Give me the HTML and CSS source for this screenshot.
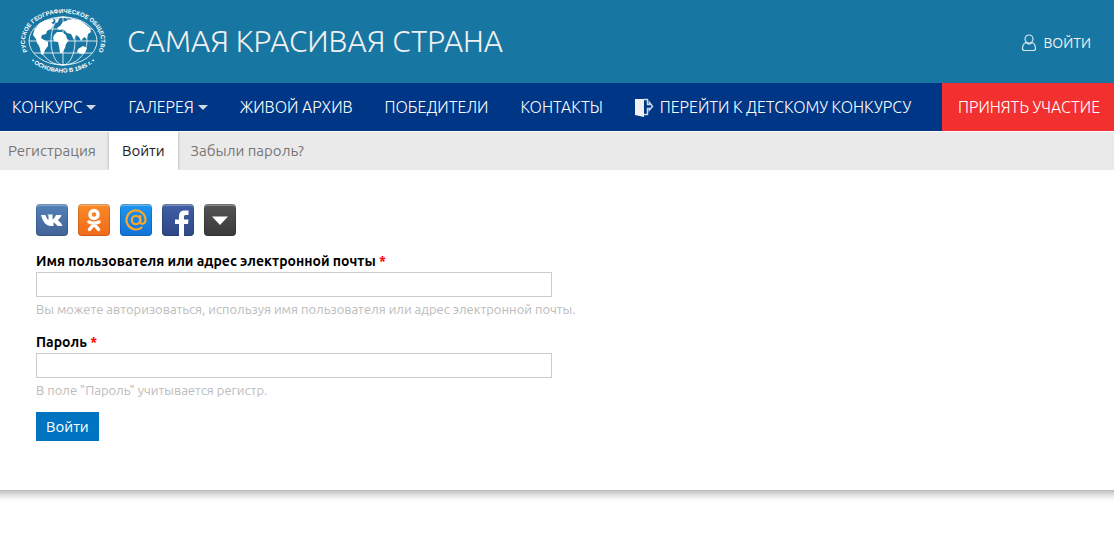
FILE: index.html
```html
<!DOCTYPE html>
<html lang="ru">

<head>
  <meta charset="utf-8">
  <title>Самая красивая страна</title>
  <link rel="stylesheet" href="styles.css">
</head>

<body>
  <div class="wrapper">
    <header class="header">
      <a class="brand" href="#">
        <svg class="logo" viewBox="0 0 88 68" width="88" height="68" aria-hidden="true">
          <defs>
            <path id="arc-top" d="M13.600 50.900A38 28 0 1 1 74.400 50.900" />
            <path id="arc-bottom" d="M8 50A42 32 0 0 0 80 50" />
          </defs>
          <ellipse class="globe-line" cx="44" cy="34" rx="34" ry="24" />
          <ellipse class="globe-line" cx="44" cy="34" rx="24" ry="24" />
          <ellipse class="globe-line" cx="44" cy="34" rx="12" ry="24" />
          <path class="globe-line" d="M10 34h68M44 10v48M15 22h58M15 46h58" />
          <path class="land" d="M16 22l5-6 6-3 6-1 2 2-3 2 3 1-2 4-5 3-1 3-4 1-1 3 3 2 4 2 0 4-3 4-2 5-2-1-1-7-3-4-1-4-3-4 1-4z" />
          <path class="land" d="M35 28l3-3 5 0 4 3 1 4 2 1-3 4-1 4-3 5-2 0-1-7-1-4-4-1-1-3z" />
          <path class="land" d="M41 19l3-4 5-2 5-1 6 1 5 3 6 5 1 4-3 2-1 5-3-2-3 4-2-4-3-2-2 5-3-6-4-1-4-4-4 1-2-2z" />
          <path class="land" d="M59 42l5-3 4 2-2 5-4 1-4-2zM36 12l4-1-1 4-2 1z" />
          <text class="logo-text" text-anchor="middle"><textPath href="#arc-top" startOffset="50%">РУССКОЕ ГЕОГРАФИЧЕСКОЕ ОБЩЕСТВО</textPath></text>
          <text class="logo-text" text-anchor="middle"><textPath href="#arc-bottom" startOffset="50%">• ОСНОВАНО В 1845 г. •</textPath></text>
        </svg>
        <span class="site-name">САМАЯ КРАСИВАЯ СТРАНА</span>
      </a>
      <a class="login-link" href="#">
        <svg width="16" height="18" viewBox="0 0 16 18" aria-hidden="true">
          <circle cx="8" cy="5" r="4" />
          <path d="M5 8.500C2.500 9.500 1.500 11.500 1.500 14.500Q1.500 16.500 3.500 16.500H12.500Q14.500 16.500 14.500 14.500C14.500 11.500 13.500 9.500 11 8.500M5 8.500Q8 11.500 11 8.500" />
        </svg>
        ВОЙТИ
      </a>
    </header>

    <nav class="menu">
      <a class="menu-item has-children" href="#">КОНКУРС</a>
      <a class="menu-item has-children" href="#">ГАЛЕРЕЯ</a>
      <a class="menu-item" href="#">ЖИВОЙ АРХИВ</a>
      <a class="menu-item" href="#">ПОБЕДИТЕЛИ</a>
      <a class="menu-item" href="#">КОНТАКТЫ</a>
      <a class="menu-item" href="#">
        <svg class="door" width="19" height="19" viewBox="0 0 19 19" aria-hidden="true">
          <path class="door-leaf" d="M0 1H9V19L0 17z" />
          <path class="door-arrow" d="M9 1.500H12.500V6.500H14.500V4.500L17.500 8.500L14.500 12V10.500H12.500V16.500H9" />
        </svg>
        ПЕРЕЙТИ К ДЕТСКОМУ КОНКУРСУ
      </a>
      <a class="menu-item join" href="#">ПРИНЯТЬ УЧАСТИЕ</a>
    </nav>

    <div class="tabs">
      <a class="tab" href="#">Регистрация</a>
      <a class="tab active" href="#">Войти</a>
      <a class="tab" href="#">Забыли пароль?</a>
    </div>

    <main class="content">
      <div class="social">
        <button type="button" class="social-button vk" aria-label="ВКонтакте">
          <svg viewBox="0 0 32 32" aria-hidden="true">
            <path d="M5 11H9.500C10.500 14 11.500 15.500 12.500 16V11.500L11 10.500H16.500V15.500C18 15 19 13 20 11H25.500C25 13 23.500 14.500 21.800 16.300C23.500 17.800 25.500 19 26.500 22H21.500C20 20 19 19 17.500 18.500V22H15C10 22 7 18 5 11z" />
          </svg>
        </button>
        <button type="button" class="social-button ok" aria-label="Одноклассники">
          <svg viewBox="0 0 32 32" aria-hidden="true">
            <circle class="stroke" cx="16" cy="10.500" r="4" />
            <path class="stroke" d="M11 18Q16 20.500 21 18M16 20L11.500 25.500M16 20L20.500 25.500" />
          </svg>
        </button>
        <button type="button" class="social-button mailru" aria-label="Mail.ru">
          <svg viewBox="0 0 32 32" aria-hidden="true">
            <circle class="stroke" cx="16" cy="16" r="4.200" />
            <path class="stroke" d="M20.200 12V17.500C20.200 21 25.500 20.500 25.500 16A9.500 9.500 0 1 0 21.500 23.700" />
          </svg>
        </button>
        <button type="button" class="social-button facebook" aria-label="Facebook">
          <svg viewBox="0 0 32 32" aria-hidden="true">
            <path d="M17 32V20H13V15.500H17V12.500C17 8.500 19 6.500 22.500 6.500H26.500V11H24C22.500 11 22 11.500 22 13V15.500H26.500L26 20H22V32z" />
          </svg>
        </button>
        <button type="button" class="social-button more" aria-label="Ещё">
          <svg viewBox="0 0 32 32" aria-hidden="true">
            <path d="M8 12.500H24L16 21z" />
          </svg>
        </button>
      </div>

      <form class="login-form">
        <div class="form-item">
          <label for="name">Имя пользователя или адрес электронной почты <span class="required">*</span></label>
          <input type="text" id="name" name="name">
          <div class="description">Вы можете авторизоваться, используя имя пользователя или адрес электронной почты.</div>
        </div>
        <div class="form-item">
          <label for="pass">Пароль <span class="required">*</span></label>
          <input type="password" id="pass" name="pass">
          <div class="description">В поле "Пароль" учитывается регистр.</div>
        </div>
        <button type="submit" class="submit">Войти</button>
      </form>
    </main>
  </div>
  <div class="page-edge"></div>
</body>

</html>
```
FILE: styles.css
```css
* {
  box-sizing: border-box;
}

body {
  margin: 0;
  font-family: Ubuntu, "Open Sans", "Noto Sans", sans-serif;
  font-size: 15px;
  color: #000;
  background-color: #fff;
}

a {
  color: inherit;
  text-decoration: none;
}

/* Soft shadow under the page */
.page-edge {
  height: 12px;
  background: linear-gradient(#b8bab8, #dcdcdc 35%, #f6f6f6 70%, #fff);
}

/* Header */
.header {
  display: flex;
  align-items: center;
  justify-content: space-between;
  padding: 7px 23px 8px 19px;
  background-color: #1876a2;
  color: #f0f0f0;
}

.brand {
  display: flex;
  align-items: center;
  gap: 20px;
}

.logo {
  display: block;
}

.globe-line {
  fill: none;
  stroke: #fff;
  stroke-width: 0.8;
}

.land {
  fill: #fff;
}

.logo-text {
  font-family: "Liberation Sans", sans-serif;
  font-size: 6px;
  font-weight: bold;
  fill: #fff;
}

.site-name {
  font-size: 30px;
  font-weight: 300;
  line-height: 36px;
}

.login-link {
  display: flex;
  align-items: center;
  gap: 6px;
  padding-top: 4px;
  font-size: 14px;
  line-height: 20px;
}

.login-link svg {
  fill: none;
  stroke: #d5e6ee;
  stroke-width: 1.2;
}

/* Main menu */
.menu {
  display: flex;
  justify-content: space-between;
  padding-left: 12px;
  background-color: #003686;
  color: #fff;
  font-size: 16px;
  font-weight: 300;
  line-height: 48px;
  white-space: nowrap;
}

.menu-item {
  display: flex;
  align-items: center;
  margin-right: 32px;
}

.has-children::after {
  content: "";
  margin-left: 4px;
  border: 5px solid transparent;
  border-top-color: #ccd7e7;
  border-bottom: 0;
}

.door {
  margin-right: 6px;
}

.door-leaf {
  fill: #f0f0f0;
}

.door-arrow {
  fill: none;
  stroke: #ccd7e7;
  stroke-width: 1.5;
}

.menu-item:nth-last-child(2) {
  margin-right: 28px;
}

.join {
  margin-left: auto;
  margin-right: 0;
  padding: 0 14px 0 16px;
  background-color: #f33030;
}

/* Tabs */
.tabs {
  display: flex;
  margin-top: 1px;
  background-color: #eaeaea;
  color: #777;
  line-height: 38px;
}

.tab {
  padding: 0 13px;
}

.tab:first-child {
  padding-left: 8px;
}

.tab.active {
  background-color: #fff;
  color: #222;
  box-shadow: 0 0 3px rgba(0, 0, 0, 0.3);
  clip-path: inset(0 -3px);
}

/* Login form */
.content {
  padding: 34px 36px 49px;
}

.social {
  display: flex;
  gap: 10px;
  margin-bottom: 14px;
}

.social-button {
  width: 32px;
  height: 32px;
  padding: 0;
  border: 0;
  border-radius: 4px;
  box-shadow: inset 0 0 0 1px rgba(0, 0, 0, 0.15), inset 0 2px 0 rgba(255, 255, 255, 0.3);
  cursor: pointer;
}

.social-button svg {
  display: block;
  fill: #fff;
}

.social-button .stroke {
  fill: none;
  stroke: #fff;
  stroke-width: 3.5;
  stroke-linecap: round;
}

.vk {
  background: linear-gradient(#5181b8, #436397);
}

.ok {
  background: linear-gradient(#f98a25, #f26a1b);
}

.mailru {
  background: linear-gradient(#1b96f0, #1272d8);
}

.social-button.mailru .stroke {
  stroke: #f9a72b;
  stroke-width: 2.2;
}

.facebook {
  background: linear-gradient(#405fa5, #2f4785);
}

.more {
  background: linear-gradient(#545454, #3a3a3a);
}

.form-item {
  margin-bottom: 13px;
}

.form-item label {
  display: block;
  padding: 2px 0;
  font-size: 14px;
  font-weight: bold;
  line-height: 18px;
}

.required {
  color: #f00;
}

.form-item input {
  display: block;
  width: 516px;
  max-width: 100%;
  height: 25px;
  padding: 2px 4px;
  border: 1px solid #ccc;
  font: inherit;
}

.description {
  margin-top: 3px;
  font-size: 13px;
  line-height: 18px;
  color: #bbb;
}

.submit {
  display: block;
  height: 29px;
  padding: 0 10px;
  border: 0;
  background-color: #0074c1;
  color: #fff;
  font-family: inherit;
  font-size: 15px;
  cursor: pointer;
}
```
